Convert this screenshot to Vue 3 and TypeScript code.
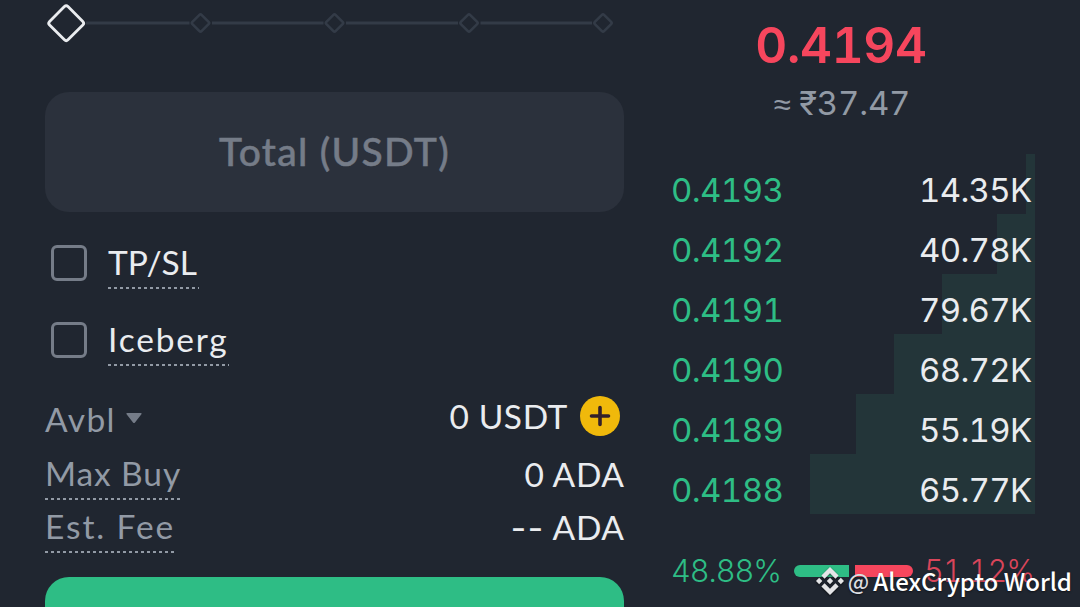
<script setup lang="ts">
/**
 * Spot order form (left) next to the bid side of the order book (right).
 */
import { computed, ref } from "vue"

interface Bid {
    price: string
    amount: string
    /** Cumulative depth, in px of the book's width. */
    depth: number
}

const bids: Bid[] = [
    { price: "0.4193", amount: "14.35K", depth: 9 },
    { price: "0.4192", amount: "40.78K", depth: 38 },
    { price: "0.4191", amount: "79.67K", depth: 93 },
    { price: "0.4190", amount: "68.72K", depth: 141 },
    { price: "0.4189", amount: "55.19K", depth: 179 },
    { price: "0.4188", amount: "65.77K", depth: 225 },
]

const options = ref([
    { id: "tpsl", label: "TP/SL", checked: false },
    { id: "iceberg", label: "Iceberg", checked: false },
])

const total = ref("")
const buyShare = 48.88
const sellShare = computed(() => (100 - buyShare).toFixed(2))

// Slider steps: 25%, 50%, 75%, 100%
const steps = [155.5, 289.5, 424, 558]
</script>

<template>
    <main class="trade">
        <section class="form">
            <svg class="slider" width="579" height="46" viewBox="0 0 579 46" fill="none">
                <g stroke="#333b47" stroke-width="3">
                    <path d="M41 23H144.5M167 23H278.5M301 23H413M435.5 23H547" />
                    <rect
                        v-for="x in steps"
                        :key="x"
                        :x="x - 6.5"
                        y="16.5"
                        width="13"
                        height="13"
                        rx="1.5"
                        stroke-width="2.6"
                        :transform="`rotate(45 ${x} 23)`"
                    />
                </g>
                <rect x="8.2" y="10.2" width="26" height="26" rx="2.5" stroke="#eaecef" stroke-width="2.8" transform="rotate(45 21.2 23.2)" />
            </svg>

            <input v-model="total" class="total" type="text" placeholder="Total (USDT)" />

            <label v-for="opt in options" :key="opt.id" class="option">
                <input v-model="opt.checked" class="check" type="checkbox" />
                <span class="dashed" :class="`option-${opt.id}`">{{ opt.label }}</span>
            </label>

            <div class="row row-avbl">
                <span class="muted avbl">
                    Avbl
                    <svg class="caret" width="16" height="11" viewBox="0 0 16 11"><path d="M1.3 0H14.7Q16.4 0 15.4 1.2L9 9.6Q8 10.6 7 9.6L.6 1.2Q-.4 0 1.3 0Z" fill="#757c88" /></svg>
                </span>
                <span class="value balance">
                    0 USDT
                    <svg class="plus" width="40" height="40" viewBox="0 0 40 40">
                        <circle cx="20" cy="20" r="20" fill="#f0b90b" />
                        <path d="M20 11.5V28.5M11.5 20H28.5" stroke="#33202a" stroke-width="3.6" stroke-linecap="round" />
                    </svg>
                </span>
            </div>
            <div class="row row-max">
                <span class="muted dashed maxbuy">Max Buy</span>
                <span class="value ada">0 ADA</span>
            </div>
            <div class="row row-fee">
                <span class="muted dashed fee">Est. Fee</span>
                <span class="value ada"><span class="dashes">--</span> ADA</span>
            </div>

            <button class="buy" type="button" aria-label="Buy"></button>
        </section>

        <section class="book">
            <div class="last">0.4194</div>
            <div class="fiat"><span class="approx">≈</span> ₹37.47</div>

            <div class="bids">
                <div v-for="bid in bids" :key="bid.price" class="bid">
                    <div class="depth" :style="{ width: bid.depth + 'px' }"></div>
                    <span class="price">{{ bid.price }}</span>
                    <span class="amount">{{ bid.amount }}</span>
                </div>
            </div>

            <div class="ratio">
                <span class="ratio-buy">{{ buyShare }}%</span>
                <div class="bar">
                    <div class="bar-buy"></div>
                    <div class="bar-sell"></div>
                </div>
                <span class="ratio-sell">{{ sellShare }}%</span>
            </div>
        </section>

        <div class="author">
            <svg width="28" height="28" viewBox="0 0 126.6 126.6" fill="#e4e5e7">
                <path d="M38.7 53.2L63.3 28.6L87.9 53.2L102.2 38.9L63.3 0L24.4 38.9Z" />
                <path d="M0 63.3L14.3 49L28.6 63.3L14.3 77.6Z" />
                <path d="M38.7 73.4L63.3 98L87.9 73.4L102.2 87.7L63.3 126.6L24.4 87.7Z" />
                <path d="M98 63.3L112.3 49L126.6 63.3L112.3 77.6Z" />
                <path d="M77.8 63.3L63.3 48.8L48.8 63.3L63.3 77.8Z" />
            </svg>
            <span class="at">@</span>
            <span class="name">AlexCrypto World</span>
        </div>
    </main>
</template>

<style>
body {
    margin: 0;
    background: #202630;
    overflow: hidden;
}
</style>

<style scoped>
.trade {
    position: relative;
    display: flex;
    gap: 48px;
    width: 1080px;
    height: 607px;
    padding: 0 45px;
    box-sizing: border-box;
    overflow: hidden;
    background: #202630;
    color: #eaecef;
    font-family: Lato, "Noto Sans", sans-serif;
    font-size: 33.5px;
    line-height: 48px;
    white-space: nowrap;
}

.form {
    display: flex;
    flex-direction: column;
    flex: none;
    width: 579px;
}

.slider {
    display: block;
    flex: none;
    overflow: visible;
}

.total {
    flex: none;
    height: 120px;
    margin: 46px 0 26px;
    padding: 0 0 2px;
    box-sizing: border-box;
    border: 0;
    border-radius: 24px;
    outline: none;
    background: #2b313c;
    color: #eaecef;
    font: 500 39px Lato, sans-serif;
    letter-spacing: 1.3px;
    text-align: center;
}

.total::placeholder {
    color: #757c88;
    opacity: 1;
    -webkit-text-stroke: 0.5px #757c88;
}

.option {
    display: flex;
    align-items: flex-start;
    flex: none;
    height: 51px;
    margin-bottom: 26px;
    padding-left: 6px;
}

.check {
    appearance: none;
    width: 36px;
    height: 36px;
    margin: 7px 21px 0 0;
    box-sizing: border-box;
    border: 3px solid #757c88;
    border-radius: 6px;
}

/* Dashed underline: 3px on, 3px off */
.dashed {
    height: 51px;
    background: repeating-linear-gradient(90deg, #929aa5 0 3px, transparent 3px 6px) left bottom / 100% 2px no-repeat;
}

.option-tpsl {
    width: 91px;
    letter-spacing: 0;
}

.option-iceberg {
    width: 121px;
    letter-spacing: 1.8px;
}

.row {
    display: flex;
    justify-content: space-between;
    align-items: flex-start;
    flex: none;
}

.row-avbl {
    height: 57px;
}

.row-max {
    height: 53px;
}

.row-fee {
    height: 75px;
}

.muted {
    color: #929aa5;
}

.avbl {
    display: flex;
    padding-top: 3px;
    letter-spacing: 1.4px;
}

.caret {
    margin: 18px 0 0 10.5px;
}

.balance {
    display: flex;
    align-items: center;
    gap: 12px;
    padding-right: 4px;
    letter-spacing: 0.6px;
}

.ada {
    margin-right: -0.6px;
    padding-top: 1px;
    letter-spacing: 0.6px;
}

.maxbuy {
    width: 135px;
    letter-spacing: 0.9px;
}

.fee {
    width: 129px;
    letter-spacing: 1.9px;
}

.dashes {
    font-family: Inter, sans-serif;
    letter-spacing: 1.5px;
}

.buy {
    flex: none;
    height: 120px;
    border: 0;
    border-radius: 24px;
    background: #2ebd85;
}

.book {
    display: flex;
    flex-direction: column;
    flex: none;
    width: 363px;
    font-family: Inter, "Noto Sans", sans-serif;
    font-size: 33px;
    font-variant-numeric: tabular-nums;
}

.last {
    margin-top: 15px;
    padding-right: 25px;
    color: #f6465d;
    font-size: 49.5px;
    font-weight: 600;
    line-height: 60px;
    letter-spacing: -0.3px;
    text-align: center;
}

.fiat {
    height: 75px;
    margin-top: 4px;
    padding-right: 23px;
    color: #929aa5;
    letter-spacing: -0.2px;
    text-align: center;
}

.approx {
    font-family: "Noto Sans", sans-serif;
    font-size: 31px;
}

.bid {
    position: relative;
    display: flex;
    justify-content: space-between;
    height: 60px;
    padding: 12px 3.5px 0 0;
    box-sizing: border-box;
    letter-spacing: -0.7px;
}

.depth {
    position: absolute;
    top: 0;
    right: 0;
    height: 100%;
    background: #233539;
}

.price {
    margin-left: -1px;
    color: #2ebd85;
    letter-spacing: -0.6px;
}

.price,
.amount {
    position: relative;
}

.ratio {
    display: flex;
    align-items: center;
    margin-top: 32px;
    font-size: 30.7px;
    font-weight: 350;
    letter-spacing: -1.1px;
}

.ratio-buy {
    flex: none;
    width: 123px;
    margin-left: -1px;
    padding-top: 1px;
    color: #2ebd85;
}

.ratio-sell {
    flex: none;
    margin-left: 11px;
    padding-top: 1px;
    color: #d9455a;
}

.bar {
    display: flex;
    flex: none;
    gap: 6px;
    width: 119px;
    height: 12px;
}

.bar-buy {
    width: 55px;
    border-radius: 6px 0 0 6px;
    background: #2ebd85;
}

.bar-sell {
    width: 58px;
    border-radius: 0 6px 6px 0;
    background: #f6465d;
}

/* Author stamp lies over the bottom right corner */
.author {
    position: absolute;
    right: 8px;
    bottom: 8px;
    display: flex;
    align-items: center;
    height: 36px;
    color: #fff;
    font-family: "Noto Sans CJK SC", sans-serif;
    font-size: 24px;
    font-weight: 500;
    line-height: 36px;
    text-shadow: 0 1px 2px rgba(0, 0, 0, 0.5);
}

.author svg {
    filter: drop-shadow(0 1px 1px rgba(0, 0, 0, 0.6));
}

.at {
    margin: -2px 4px 0;
    font-size: 22px;
    color: #dcdde0;
}
</style>
